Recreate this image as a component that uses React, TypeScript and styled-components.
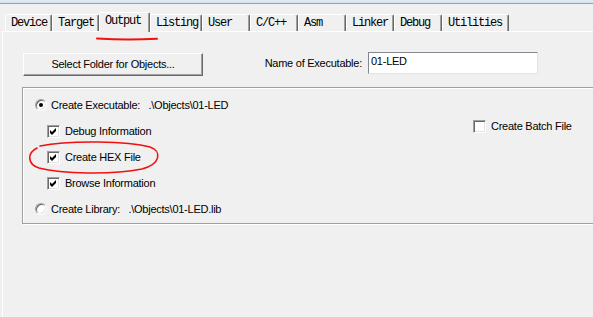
import React from "react";
import styled, { createGlobalStyle } from "styled-components";

const GlobalStyle = createGlobalStyle`
  html, body {
    margin: 0;
    padding: 0;
    background: #f0f0f0;
    overflow: hidden;
  }
  #root { width: 593px; height: 317px; overflow: hidden; }
`;

const Window = styled.div`
  width: 593px;
  height: 317px;
  position: relative;
  overflow: hidden;
  background: #f0f0f0;
  font-family: "Liberation Sans", Arial, sans-serif;
  font-size: 11px;
  letter-spacing: -0.25px;
  color: #000;
`;

const FrameStrip = styled.div`
  height: 3px;
  background: linear-gradient(#e4ecf6, #d5e1ef);
  border-bottom: 1px solid #93a3b8;
`;

const TabBar = styled.div`
  display: flex;
  align-items: flex-end;
  height: 27px;
  padding-left: 5px;
  position: relative;
  z-index: 2;
`;

const Tab = styled.div<{ $w: number; $active?: boolean }>`
  box-sizing: border-box;
  width: ${(p) => p.$w}px;
  height: ${(p) => (p.$active ? 20 : 17)}px;
  margin-bottom: ${(p) => (p.$active ? -1 : 0)}px;
  padding: 2px 0 0 5px;
  border-left: 1px solid #ffffff;
  border-top: 1px solid #ffffff;
  border-right: 1px solid #696969;
  border-radius: 2px 2px 0 0;
  box-shadow: inset -1px 0 0 #a0a0a0;
  background: #f0f0f0;
  font-family: "Liberation Mono", "DejaVu Sans Mono", monospace;
  font-size: 12px;
  letter-spacing: -1.2px;
  line-height: 13px;
  white-space: pre;
`;

const Panel = styled.div`
  margin-left: 2px;
  border-left: 1px solid #ffffff;
  border-top: 1px solid #ffffff;
  padding: 20px 0 0 20px;
  height: 300px;
  width: 700px;
`;

const TopRow = styled.div`
  display: grid;
  grid-template-columns: 180px 165px 170px;
  align-items: start;
`;

const Button = styled.div`
  box-sizing: border-box;
  height: 23px;
  margin-top: 1px;
  border: 1px solid;
  border-color: #ffffff #696969 #696969 #ffffff;
  box-shadow: inset -1px -1px 0 #a0a0a0;
  background: #f0f0f0;
  display: flex;
  align-items: center;
  justify-content: center;
  padding-bottom: 1px;
`;

const FieldLabel = styled.div`
  line-height: 22px;
  text-align: right;
  padding-right: 6px;
`;

const TextInput = styled.div`
  box-sizing: border-box;
  height: 22px;
  border: 1px solid;
  border-color: #828790 #e3e3e3 #e3e3e3 #828790;
  background: #ffffff;
  padding: 0 0 0 2px;
  line-height: 16px;
`;

const GroupBox = styled.div`
  box-sizing: border-box;
  margin-top: 11px;
  margin-left: -1px;
  width: 640px;
  height: 137px;
  border: 1px solid #a0a0a0;
  box-shadow: inset 1px 1px 0 #ffffff, 1px 1px 0 #ffffff;
  padding: 4px 0 0 12px;
  display: grid;
  grid-template-columns: 438px 1fr;
  grid-auto-rows: 26px;
`;

const Option = styled.label<{ $indent?: boolean; $col?: number; $row?: number; $top?: boolean }>`
  display: flex;
  align-items: ${(p) => (p.$top ? "flex-start" : "center")};
  padding-top: ${(p) => (p.$top ? 2 : 0)}px;
  padding-left: ${(p) => (p.$indent ? 12 : 0)}px;
  grid-column: ${(p) => p.$col ?? 1};
  grid-row: ${(p) => p.$row ?? "auto"};
  white-space: pre;
`;

const RadioDot = styled.span<{ $on?: boolean }>`
  box-sizing: border-box;
  width: 12px;
  height: 12px;
  margin-right: 4px;
  border-radius: 50%;
  border: 1px solid;
  border-color: #a0a0a0 #ffffff #ffffff #a0a0a0;
  box-shadow: inset 1px 1px 0 #696969, inset -1px -1px 0 #e3e3e3;
  background: #ffffff;
  display: flex;
  align-items: center;
  justify-content: center;
  &::after {
    content: "";
    display: ${(p) => (p.$on ? "block" : "none")};
    width: 4px;
    height: 4px;
    border-radius: 50%;
    background: #000;
  }
`;

const CheckBox = styled.span`
  box-sizing: border-box;
  width: 13px;
  height: 13px;
  margin-right: 5px;
  border: 1px solid;
  border-color: #a0a0a0 #ffffff #ffffff #a0a0a0;
  box-shadow: inset 1px 1px 0 #696969, inset -1px -1px 0 #e3e3e3;
  background: #ffffff;
  display: flex;
  align-items: center;
  justify-content: center;
`;

const Annotations = styled.svg`
  position: absolute;
  left: 0;
  top: 0;
  pointer-events: none;
  z-index: 5;
`;

const Check = ({ on }: { on?: boolean }) => (
  <CheckBox>
    {on && (
      <svg width="7" height="7" viewBox="0 0 7 7">
        <polygon points="0,2 2,4 6,0 6,3 2,7 0,5" fill="#000" />
      </svg>
    )}
  </CheckBox>
);

const tabs: { label: string; w: number; active?: boolean }[] = [
  { label: "Device", w: 47 },
  { label: "Target", w: 47 },
  { label: "Output", w: 51, active: true },
  { label: "Listing", w: 52 },
  { label: "User", w: 48 },
  { label: "C/C++", w: 48 },
  { label: "Asm", w: 48 },
  { label: "Linker", w: 48 },
  { label: "Debug", w: 48 },
  { label: "Utilities", w: 67 },
];

export default function App() {
  return (
    <Window>
      <GlobalStyle />
      <FrameStrip />
      <TabBar>
        {tabs.map((t) => (
          <Tab key={t.label} $w={t.w} $active={t.active}>
            {t.label}
          </Tab>
        ))}
      </TabBar>
      <Panel>
        <TopRow>
          <Button>Select Folder for Objects...</Button>
          <FieldLabel>Name of Executable:</FieldLabel>
          <TextInput>01-LED</TextInput>
        </TopRow>
        <GroupBox>
          <Option $row={1}>
            <RadioDot $on />
            {"Create Executable:   .\\Objects\\01-LED"}
          </Option>
          <Option $row={2} $indent>
            <Check on />
            Debug Information
          </Option>
          <Option $row={2} $col={2} $top>
            <Check />
            Create Batch File
          </Option>
          <Option $row={3} $indent>
            <Check on />
            Create HEX File
          </Option>
          <Option $row={4} $indent>
            <Check on />
            Browse Information
          </Option>
          <Option $row={5}>
            <RadioDot />
            {"Create Library:   .\\Objects\\01-LED.lib"}
          </Option>
        </GroupBox>
      </Panel>
      <Annotations width="593" height="317" viewBox="0 0 593 317">
        <path d="M97 38.6 Q127 40.2 157 38.8" stroke="#f01010" strokeWidth="2" fill="none" strokeLinecap="round" />
        <path
          d="M40 146 C70 140 128 141 150 147 C162 151 161 164 142 169 C112 175 62 174 39 168 C27 164 27 153 37 148"
          stroke="#f01010"
          strokeWidth="1.6"
          fill="none"
          strokeLinecap="round"
        />
      </Annotations>
    </Window>
  );
}
